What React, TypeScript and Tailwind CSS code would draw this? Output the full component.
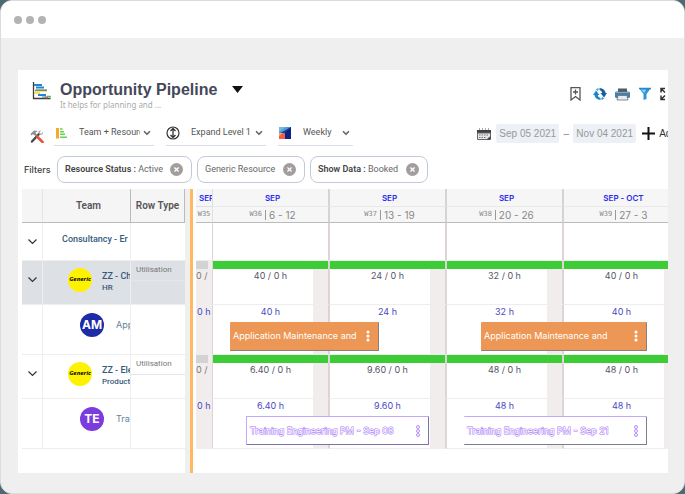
import { ChevronDown, X } from 'lucide-react';

interface Booking {
  title: string;
  left: number;
  width: number;
  variant: 'solid' | 'outline' | 'open';
}

interface Week {
  month: string;
  week: string;
  days: string;
}

interface TimelineRow {
  kind: 'group' | 'resource' | 'task';
  first: string;
  hours: string[];
  bookings: (Booking | null)[];
}

const weeks: Week[] = [
  { month: 'SEP', week: 'W36', days: '6 - 12' },
  { month: 'SEP', week: 'W37', days: '13 - 19' },
  { month: 'SEP', week: 'W38', days: '20 - 26' },
  { month: 'SEP - OCT', week: 'W39', days: '27 - 3' },
];

const timeline: TimelineRow[] = [
  { kind: 'group', first: '', hours: ['', '', '', ''], bookings: [] },
  { kind: 'resource', first: '0 /', hours: ['40 / 0 h', '24 / 0 h', '32 / 0 h', '40 / 0 h'], bookings: [] },
  {
    kind: 'task',
    first: '0 h',
    hours: ['40 h', '24 h', '32 h', '40 h'],
    bookings: [
      { title: 'Application Maintenance and', left: 17, width: 149, variant: 'solid' },
      null,
      { title: 'Application Maintenance and', left: 34, width: 166, variant: 'solid' },
    ],
  },
  { kind: 'resource', first: '0 /', hours: ['6.40 / 0 h', '9.60 / 0 h', '48 / 0 h', '48 / 0 h'], bookings: [] },
  {
    kind: 'task',
    first: '0 h',
    hours: ['6.40 h', '9.60 h', '48 h', '48 h'],
    bookings: [
      { title: 'Training Engineering PM - Sep 08', left: 33, width: 183, variant: 'outline' },
      null,
      { title: 'Training Engineering PM - Sep 21', left: 17, width: 183, variant: 'open' },
    ],
  },
];

const filters = [
  { label: 'Resource Status :', value: 'Active', size: 'w-[135px]' },
  { label: '', value: 'Generic Resource', size: 'w-[108px]' },
  { label: 'Show Data :', value: 'Booked', size: 'w-[118px]' },
];

const rowHeights = { group: 'h-[38px]', resource: 'h-[44px]', task: 'h-[50px]' };

const bookingStyles = {
  solid: 'bg-[#ec9755] text-white border-r border-b border-[#8b8078]',
  outline: 'bg-white text-white border border-[#c4a8fb] border-r-[#7d72a8] border-b-[#7d72a8] [-webkit-text-stroke:1px_#a678fa] [paint-order:stroke_fill]',
  open: 'bg-white text-white border-y border-r border-t-[#c4a8fb] border-r-[#7d7d90] border-b-[#7d7d90] [-webkit-text-stroke:1px_#a678fa] [paint-order:stroke_fill]',
};

function GanttIcon() {
  return (
    <svg width="20" height="18" viewBox="0 0 20 18" className="shrink-0">
      <path d="M1.500 0v16.500h17" fill="none" stroke="#3d3d3d" strokeWidth="1.300" />
      <path d="M2 3h8M4 5.500h8" stroke="#2387c9" strokeWidth="2" />
      <path d="M4 7.500h11" stroke="#9cc8dc" strokeWidth="1" />
      <path d="M3 8.500h12" stroke="#918b20" strokeWidth="1.500" />
      <path d="M2 11h6" stroke="#e6d63b" strokeWidth="1.300" />
      <path d="M6 13h8" stroke="#2387c9" strokeWidth="1.800" />
      <path d="M10 15h5" stroke="#4db8df" strokeWidth="1.500" />
      <path d="M13 15.500h3" stroke="#ee5941" strokeWidth="1.500" />
      <path d="M15 14.500h4" stroke="#50bd58" strokeWidth="1.300" />
    </svg>
  );
}

function ToolsIcon() {
  return (
    <svg width="14" height="14" viewBox="0 0 14 14">
      <path d="M2 12.500L9 5" stroke="#484848" strokeWidth="2.400" strokeLinecap="round" />
      <path d="M13 3L11 5 9.500 4 11 1.500C9 1 8 2.500 8.500 4.500L10 6C12 6 13.500 5 13 3z" fill="#a5a5a5" />
      <path d="M5 5l3 3" stroke="#777" strokeWidth="1.600" />
      <path d="M7.500 8l5 5" stroke="#e3563b" strokeWidth="2.600" strokeLinecap="round" />
      <path d="M.5 5L4 1.500 8 2 5.500 3.500 6 5 4.500 6.500 3 5 1.500 6.500z" fill="#8f8f8f" />
    </svg>
  );
}

function LevelsIcon() {
  return (
    <svg width="11" height="11" viewBox="0 0 11 11">
      <path d="M0 0h3v10.500H0z" fill="#f9a825" />
      <path d="M4 0h2.500v2H4z" fill="#8fd96a" />
      <path d="M4 3h4v1.500H4zM4 5.500h5V7H4zM4 8.500h7V10H4z" fill="#6bd152" />
    </svg>
  );
}

function ExpandLevelIcon() {
  return (
    <svg width="14" height="14" viewBox="0 0 14 14" fill="none" stroke="#333">
      <circle cx="7" cy="7" r="6" strokeWidth="1.200" />
      <path d="M7 2.500v9M4.500 5L7 2.500 9.500 5M4.500 9L7 11.500 9.500 9" strokeWidth="1.300" />
    </svg>
  );
}

function WeeklyIcon() {
  return (
    <svg width="12" height="12" viewBox="0 0 12 12">
      <path d="M0 0h12v12H0z" fill="#143a9b" />
      <path d="M0 0h12L0 7z" fill="#4c9ad8" />
      <path d="M0 0h7L0 5z" fill="#76b7e4" />
      <path d="M6 6l6-6v12H6z" fill="#102384" />
      <path d="M0 6h6v6H0z" fill="#ef633a" />
      <path d="M0 6h4L0 9z" fill="#f6a286" />
    </svg>
  );
}

function CalendarIcon() {
  return (
    <svg width="14" height="12" viewBox="0 0 14 12">
      <path d="M2.500 0v2M5.500 0v2M8.500 0v2M11.500 0v2" stroke="#aaa" />
      <path d="M0 2h14v3H0z" fill="#3f4146" />
      <path d="M.5 5h13v6.500H.5z" fill="#e4e6ea" stroke="#666" />
      <path d="M2 7h10M2 9.500h7" stroke="#777" strokeDasharray="1.500 1" strokeWidth="1.200" />
      <path d="M9.500 11.500l4-3.500v3.500z" fill="#444" />
    </svg>
  );
}

function BookmarkIcon() {
  return (
    <svg width="11" height="14" viewBox="0 0 11 14" fill="none" stroke="#555">
      <path d="M1 .7h9v12.300L5.500 9.500 1 13z" strokeWidth="1.300" />
      <path d="M5.500 2.500v5M3 5h5" strokeWidth="1.300" />
    </svg>
  );
}

function RefreshIcon() {
  return (
    <svg width="14" height="14" viewBox="0 0 14 14">
      <path d="M3 3.500l3.500 4.500H4.800c.2 1.500 1 2.500 2.700 3v2C4.200 12.800 1.800 11 1.400 8H0z" fill="#1a86cc" />
      <path d="M11 10.500L7.500 6h1.700C9 4.500 8.200 3.500 6.500 3V1c3.300.2 5.700 2 6.100 5H14z" fill="#145f9e" />
      <path d="M1.500 4.500C2.300 2.700 3.700 1.500 5.500 1v2.200l-1 .8-1.500-1.500z" fill="#4aa3dc" />
      <path d="M12.500 9.500c-.8 1.800-2.200 3-4 3.500v-2.200l1-.8L11 11.500z" fill="#2f93d4" />
    </svg>
  );
}

function PrinterIcon() {
  return (
    <svg width="15" height="13" viewBox="0 0 15 13">
      <path d="M3 .5h9V4H3z" fill="#55585d" />
      <rect x="0" y="3.500" width="15" height="6.500" rx="1.500" fill="#477fa7" />
      <path d="M1 4.500h13" stroke="#7fa8c5" />
      <path d="M3 7.500h9l1 4.500H2z" fill="#e6ebef" stroke="#68747e" strokeWidth=".8" />
    </svg>
  );
}

function FunnelIcon() {
  return (
    <svg width="14" height="14" viewBox="0 0 14 14">
      <path d="M1 1h12L8.500 7v5L5.500 13V7z" fill="#2b95da" />
      <path d="M3 2.500h5L6.500 6z" fill="#8fd0f5" />
      <path d="M1 1.500h12" stroke="#2f86c6" strokeWidth="1.300" />
    </svg>
  );
}

function FullscreenIcon() {
  return (
    <svg width="14" height="14" viewBox="0 0 14 14" fill="none" stroke="#333" strokeWidth="1.500">
      <path d="M1 5.500V1.500h4M1.500 2L5 5.500M1 8.500v4h4M1.500 12L5 8.500M9 1.500h4v4M12.500 2L9 5.500M13 8.500v4H9M12.500 12L9 8.500" />
    </svg>
  );
}

function ToolbarSelect({ label, options, size, icon }: { label: string; options: string[]; size: string; icon: React.ReactNode }) {
  return (
    <div className={`relative flex h-6 shrink-0 items-center border-b border-[#d9dde5] ${size}`}>
      <span className="flex w-[14px] shrink-0 justify-center">{icon}</span>
      <select aria-label={label} className="ml-[11px] h-full min-w-0 flex-1 appearance-none bg-transparent pr-[14px] font-['Roboto',sans-serif] text-[9px] text-clip text-[#555] outline-none">
        {options.map((option) => (
          <option key={option}>{option}</option>
        ))}
      </select>
      <ChevronDown size={10} strokeWidth={4} className="pointer-events-none absolute right-[2px] text-[#666]" />
    </div>
  );
}

function ExpandButton() {
  return (
    <button type="button" aria-label="Toggle row" className="flex w-full justify-center">
      <svg width="9" height="6" viewBox="0 0 9 6" fill="none" stroke="#333" strokeWidth="1.200">
        <path d="M.5.5l4 4 4-4" />
      </svg>
    </button>
  );
}

function Avatar({ initials, color }: { initials: string; color: string }) {
  return <span className={`flex h-6 w-6 shrink-0 items-center justify-center rounded-full font-['Inter',sans-serif] text-[12px] font-bold text-white ${color}`}>{initials}</span>;
}

function GenericAvatar() {
  return (
    <span className="flex h-6 w-6 shrink-0 items-center justify-center rounded-full bg-[#fff200] font-['Open_Sans',sans-serif] text-[6px] font-bold text-black italic">
      Generic
    </span>
  );
}

function UtilisationCell() {
  return (
    <td className="border-b border-[#eeeeee] p-0 align-top">
      <div className="h-5 border-b border-[#e6e6e8] pl-[5px] font-['Roboto',sans-serif] text-[8px] leading-[18px] text-[#777]">Utilisation</div>
    </td>
  );
}

function ResourceRow({ name, unit, selected }: { name: string; unit: string; selected?: boolean }) {
  return (
    <tr className={`h-[44px] ${selected ? 'bg-[#dde0e5]' : ''}`}>
      <td className="border-r border-b border-[#eeeeee] p-0 pb-[6px]">
        <ExpandButton />
      </td>
      <td className="overflow-hidden border-r border-b border-[#eeeeee] p-0 pb-[6px] pl-[25px]">
        <div className="flex items-center gap-[10px] whitespace-nowrap">
          <GenericAvatar />
          <div className="pt-1 font-['Roboto',sans-serif] font-medium text-[#355a7a]">
            <div className="text-[9px] leading-[12px]">{name}</div>
            <div className="text-[8px] leading-[12px]">{unit}</div>
          </div>
        </div>
      </td>
      <UtilisationCell />
    </tr>
  );
}

function TaskRow({ name, initials, color }: { name: string; initials: string; color: string }) {
  return (
    <tr className="h-[50px]">
      <td className="border-r border-b border-[#eeeeee] p-0" />
      <td className="overflow-hidden border-r border-b border-[#eeeeee] p-0 pb-[10px] pl-[37px]">
        <div className="flex items-center gap-3 text-[9px] whitespace-nowrap text-[#66819a]">
          <Avatar initials={initials} color={color} />
          {name}
        </div>
      </td>
      <td className="border-b border-[#eeeeee] p-0" />
    </tr>
  );
}

function ResourceTable() {
  return (
    <table className="w-[163px] shrink-0 table-fixed border-separate border-spacing-0 self-start">
      <colgroup>
        <col className="w-[21px]" />
        <col className="w-[88px]" />
        <col className="w-[54px]" />
      </colgroup>
      <thead className="bg-[#f5f5f5] text-[10px] text-[#555]">
        <tr className="h-[34px]">
          <th aria-label="Expand" className="border-r border-b border-r-[#e5e5e5] border-b-[#bbbbbb] p-0" />
          <th className="border-r border-b border-[#bbbbbb] p-0 pl-1 font-['Roboto',sans-serif] font-semibold">Team</th>
          <th className="border-r border-b border-[#bbbbbb] p-0 font-['Roboto',sans-serif] font-semibold whitespace-nowrap">Row Type</th>
        </tr>
      </thead>
      <tbody>
        <tr className="h-[38px]">
          <td className="border-r border-b border-[#eeeeee] p-0">
            <ExpandButton />
          </td>
          <td className="overflow-hidden border-r border-b border-[#eeeeee] p-0 pb-1 pl-[19px] font-['Roboto',sans-serif] text-[9px] font-medium whitespace-nowrap text-[#355a7a]">
            Consultancy - Er
          </td>
          <td className="border-b border-[#eeeeee] p-0" />
        </tr>
        <ResourceRow name="ZZ - Ch" unit="HR" selected />
        <TaskRow name="App" initials="AM" color="bg-[#1d2ba6]" />
        <ResourceRow name="ZZ - Ele" unit="Product" />
        <TaskRow name="Trai" initials="TE" color="bg-[#7c3bdc]" />
      </tbody>
    </table>
  );
}

function BookingBar({ booking }: { booking: Booking }) {
  return (
    <button
      type="button"
      className={`absolute top-[17px] z-10 flex h-[29px] items-center justify-between rounded-[1px] pr-2 pl-[3px] text-[9px] whitespace-nowrap ${bookingStyles[booking.variant]}`}
      style={{ left: booking.left, width: booking.width }}
    >
      {booking.title}
      <svg width="4" height="12" viewBox="0 0 4 12" fill={booking.variant === 'solid' ? '#fff' : 'none'} stroke={booking.variant === 'solid' ? 'none' : '#b48cfa'}>
        <circle cx="2" cy="2" r="1.500" />
        <circle cx="2" cy="6" r="1.500" />
        <circle cx="2" cy="10" r="1.500" />
      </svg>
    </button>
  );
}

function HoursCell({ row, index }: { row: TimelineRow; index: number }) {
  const booking = row.bookings[index];
  if (row.kind === 'group') {
    return <td className="border-r-2 border-b border-r-[#ddd5d5] border-b-[#eeeeee] p-0" />;
  }
  return (
    <td className="relative border-r-2 border-b border-r-[#ddd5d5] border-b-[#eeeeee] bg-[linear-gradient(to_right,transparent_calc(100%_-_15px),#f1eded_calc(100%_-_15px))] p-0 text-center align-top text-[9px]">
      {row.kind === 'resource' && <div className="h-2 bg-[#3ccd36]" />}
      <div className={row.kind === 'resource' ? 'leading-[13px] text-[#555566]' : 'leading-[13px] text-[#4949c0]'}>{row.hours[index]}</div>
      {booking && <BookingBar booking={booking} />}
    </td>
  );
}

function Timeline() {
  return (
    <div className="min-w-0 flex-1 overflow-hidden pl-[3px]">
      <table className="w-[485px] table-fixed border-separate border-spacing-0">
        <colgroup>
          <col className="w-[17px]" />
          <col className="w-[117px]" />
          <col className="w-[117px]" />
          <col className="w-[117px]" />
          <col className="w-[117px]" />
        </colgroup>
        <thead className="bg-[#f6f6f6]">
          <tr className="h-[18px] text-[8px] text-[#2b2bf0]">
            <th className="overflow-hidden border-r border-b border-[#e0e0e0] p-0 pl-[3px] text-left font-semibold whitespace-nowrap">SEP</th>
            {weeks.map((week) => (
              <th key={week.week} className="border-r-2 border-b border-r-[#d8d3d3] border-b-[#e9e9e9] p-0 pl-1 font-semibold">{week.month}</th>
            ))}
          </tr>
          <tr className="h-[16px] text-[#888]">
            <th className="overflow-hidden border-r border-b border-r-[#e0e0e0] border-b-[#bbbbbb] p-0 font-['DejaVu_Sans_Mono',monospace] text-[7px] font-normal">W35</th>
            {weeks.map((week) => (
              <th key={week.week} className="border-r-2 border-b border-r-[#d8d3d3] border-b-[#bbbbbb] p-0 pl-1 font-normal">
                <div className="flex items-center justify-center gap-[3px]">
                  <span className="font-['DejaVu_Sans_Mono',monospace] text-[7px]">{week.week}</span>
                  <span className="h-[10px] w-px bg-[#999]" />
                  <span className="text-[10px] leading-[14px]">{week.days}</span>
                </div>
              </th>
            ))}
          </tr>
        </thead>
        <tbody>
          {timeline.map((row, rowIndex) => (
            <tr key={rowIndex} className={rowHeights[row.kind]}>
              <td className={`overflow-hidden border-r border-b border-r-[#ddd5d5] border-b-[#eeeeee] p-0 align-top text-[9px] whitespace-nowrap ${row.kind === 'group' ? '' : 'bg-[#f1eded]'}`}>
                {row.kind === 'resource' && <div className="h-2 w-3 bg-[#d3d3d3]" />}
                <div className={row.kind === 'resource' ? 'leading-[13px] text-[#777]' : 'pl-px leading-[13px] text-[#4949c0]'}>{row.first}</div>
              </td>
              {weeks.map((week, index) => (
                <HoursCell key={week.week} row={row} index={index} />
              ))}
            </tr>
          ))}
        </tbody>
      </table>
    </div>
  );
}

export default function App() {
  return (
    <div className="min-h-screen bg-[#4b6a73] font-['Inter',sans-serif]">
      <div className="flex min-h-screen flex-col overflow-hidden rounded-xl border border-[#dcdcdc] bg-[#efefef]">
        <div className="flex h-[37px] items-center gap-1 bg-white pl-[13px]">
          <span className="h-2 w-2 rounded-full bg-[#b3b3b3]" />
          <span className="h-2 w-2 rounded-full bg-[#b3b3b3]" />
          <span className="h-2 w-2 rounded-full bg-[#b3b3b3]" />
        </div>

        <main className="mx-4 mt-8 mb-5 ml-[17px] flex flex-1 flex-col overflow-hidden bg-white">
          <header className="flex h-[51px] items-start pt-3 pl-[14px]">
            <GanttIcon />
            <div className="ml-2">
              <h1 className="font-['Liberation_Sans',sans-serif] text-[16px] leading-[16px] font-bold text-[#44485a]">Opportunity Pipeline</h1>
              <p className="font-['Noto_Sans',sans-serif] text-[8px] leading-[14px] text-[#aaaaaa]">It helps for planning and ...</p>
            </div>
            <button type="button" aria-label="Change view" className="mt-1 ml-[15px]">
              <svg width="11" height="7" viewBox="0 0 11 7">
                <path d="M0 0h11L5.500 7z" fill="#111" />
              </svg>
            </button>
            <div className="-mr-[6px] ml-auto flex items-center gap-2 pt-[5px]">
              <button type="button" aria-label="Bookmark" className="mr-1"><BookmarkIcon /></button>
              <button type="button" aria-label="Refresh"><RefreshIcon /></button>
              <button type="button" aria-label="Print"><PrinterIcon /></button>
              <button type="button" aria-label="Filter"><FunnelIcon /></button>
              <button type="button" aria-label="Full screen"><FullscreenIcon /></button>
            </div>
          </header>

          <div className="flex h-[25px] items-center pl-3">
            <button type="button" aria-label="Settings" className="mt-[5px] mr-[10px]"><ToolsIcon /></button>
            <div className="flex gap-3">
              <ToolbarSelect label="Rows" size="w-[100px]" icon={<LevelsIcon />} options={['Team + Resource', 'Team']} />
              <ToolbarSelect label="Expand level" size="w-[100px]" icon={<ExpandLevelIcon />} options={['Expand Level 1', 'Expand Level 2']} />
              <ToolbarSelect label="Scale" size="w-[75px]" icon={<WeeklyIcon />} options={['Weekly', 'Monthly']} />
            </div>
            <div className="-mr-[9px] ml-auto flex shrink-0 items-center font-['Liberation_Sans',sans-serif] text-[10px]">
              <CalendarIcon />
              <input aria-label="From" defaultValue="Sep 05 2021" className="ml-[5px] h-[19px] w-[63px] rounded-[2px] bg-[#edf0f5] text-center text-[#999] outline-none" />
              <span className="w-[14px] text-center text-[#888]">–</span>
              <input aria-label="To" defaultValue="Nov 04 2021" className="h-[19px] w-[63px] rounded-[2px] bg-[#edf0f5] text-center text-[#999] outline-none" />
              <button type="button" className="ml-[6px] flex items-center gap-1 text-[#333]">
                <svg width="13" height="13" viewBox="0 0 13 13" stroke="#111" strokeWidth="2">
                  <path d="M6.500 0v13M0 6.500h13" />
                </svg>
                Add
              </button>
            </div>
          </div>

          <div className="mt-[10px] flex items-center gap-[5px] pl-[6px]">
            <span className="w-7 text-[9px] font-medium text-[#444]">Filters</span>
            {filters.map((filter) => (
              <div key={filter.value} className={`flex h-[27px] shrink-0 items-center justify-between rounded-lg border border-[#c3c9d8] pr-2 pl-[7px] font-['Roboto',sans-serif] text-[9px] whitespace-nowrap text-[#666] ${filter.size}`}>
                <span>
                  {filter.label && <b className="font-semibold text-[#444]">{filter.label} </b>}
                  {filter.value}
                </span>
                <button type="button" aria-label={`Remove ${filter.value}`} className="flex h-[13px] w-[13px] items-center justify-center rounded-full bg-[#a39d9d] text-white">
                  <X size={7} strokeWidth={4} />
                </button>
              </div>
            ))}
          </div>

          <div className="mt-[6px] flex flex-1 pl-1">
            <ResourceTable />
            <div className="w-[5px] shrink-0 bg-[#efefef]" />
            <div className="w-[3px] shrink-0 bg-[#ffb85f]" />
            <Timeline />
          </div>
        </main>
      </div>
    </div>
  );
}
